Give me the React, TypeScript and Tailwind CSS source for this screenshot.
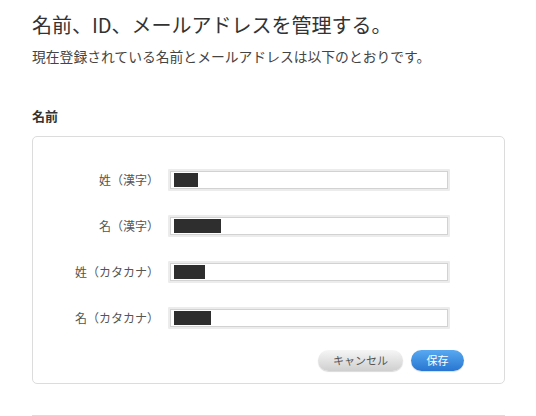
import React from "react";

const font = { fontFamily: '"Noto Sans CJK JP", "Noto Sans", sans-serif' };

function Row({ label, w }: { label: string; w: number }) {
  return (
    <div className="flex items-center">
      <div className="w-[126px] text-right text-[12px] text-[#555] leading-none">{label}</div>
      <div className="ml-[9px] w-[282px] h-[22px] bg-[#ececec] p-[2px] rounded-[1px]">
        <div className="w-full h-full bg-white border border-[#d2d2d2] flex items-center pl-[3px]">
          <div className="h-[14px] bg-[#2e2e2e]" style={{ width: w }} />
        </div>
      </div>
    </div>
  );
}

export default function App() {
  return (
    <div className="w-[536px] h-[416px] bg-white overflow-hidden text-[#333]" style={font}>
      <div className="pl-[32px] pr-[31px]">
        <h1 className="pt-[12px] text-[20px] leading-[26px] text-[#333] font-normal">名前、ID、メールアドレスを管理する。</h1>
        <p className="mt-[9px] text-[13.8px] leading-[18px] text-[#444]">現在登録されている名前とメールアドレスは以下のとおりです。</p>
        <h2 className="mt-[42px] text-[13px] leading-[18px] font-bold text-[#333]">名前</h2>
        <div className="mt-[11px] border border-[#dcdcdc] rounded-[5px] h-[248px] pt-[32px]">
          <div className="flex flex-col gap-[24px]">
            <Row label="姓（漢字）" w={24} />
            <Row label="名（漢字）" w={47} />
            <Row label="姓（カタカナ）" w={31} />
            <Row label="名（カタカナ）" w={37} />
          </div>
          <div className="flex justify-end gap-[8px] pr-[40px] mt-[21px]">
            <button className="w-[85px] h-[21px] rounded-full bg-gradient-to-b from-[#f6f6f6] to-[#cfcfcf] text-[11px] text-[#555] leading-none shadow-[0_1px_1px_rgba(0,0,0,0.15)]">キャンセル</button>
            <button className="w-[53px] h-[21px] rounded-full bg-gradient-to-b from-[#58a9f1] to-[#2775d2] text-[11px] text-white leading-none shadow-[0_1px_1px_rgba(0,0,0,0.15)]">保存</button>
          </div>
        </div>
        <div className="mt-[31px] border-t border-[#dcdcdc]" />
      </div>
    </div>
  );
}
